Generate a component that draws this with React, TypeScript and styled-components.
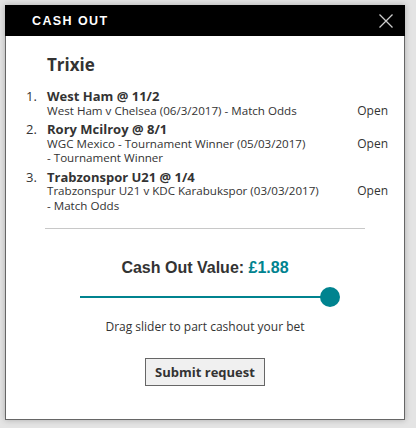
import * as React from 'react'
import styled, { createGlobalStyle } from 'styled-components'

const GlobalStyle = createGlobalStyle`
  html, body {
    margin: 0;
    padding: 0;
    background: #e4e4e4;
  }
  body {
    font-family: "Open Sans", "Liberation Sans", sans-serif;
    color: #333;
  }
`

const Page = styled.div`
  padding: 5px;
  width: 416px;
  height: 428px;
  box-sizing: border-box;
`

const Modal = styled.div`
  width: 400px;
  height: 415px;
  box-sizing: border-box;
  background: #fff;
  border: 1px solid #666;
  border-top: none;
  box-shadow: 0 0 6px rgba(0, 0, 0, 0.25);
  display: flex;
  flex-direction: column;
`

const Header = styled.div`
  height: 31px;
  margin: 0 -1px;
  background: #000;
  display: flex;
  align-items: center;
  justify-content: space-between;
  padding: 0 12px 0 27px;
`

const HeaderTitle = styled.h1`
  margin: 0;
  font-family: "Liberation Sans", Arial, sans-serif;
  font-weight: bold;
  font-size: 12.5px;
  letter-spacing: 1.4px;
  color: #fff;
`

const CloseButton = styled.button`
  border: none;
  background: none;
  padding: 0;
  width: 14px;
  height: 14px;
  display: flex;
  cursor: pointer;
`

const Body = styled.div`
  padding: 17px 16px 0 20px;
  display: flex;
  flex-direction: column;
`

const BetType = styled.h2`
  margin: 0 0 12px 21px;
  font-size: 17px;
  font-weight: bold;
  line-height: 24px;
  color: #333;
`

const Legs = styled.ol`
  list-style: none;
  margin: 0;
  padding: 0;
  display: flex;
  flex-direction: column;
  gap: 4px;
`

const Leg = styled.li`
  display: grid;
  grid-template-columns: 21px 1fr auto;
  font-size: 11.6px;
  line-height: 14.5px;
  color: #333;
`

const LegNumber = styled.span`
  font-size: 13px;
`

const LegTitle = styled.div`
  font-weight: bold;
  font-size: 13px;
`

const LegEvent = styled.span``

const LegMarket = styled.span`
  white-space: nowrap;
`

const LegStatus = styled.span`
  align-self: start;
  padding: 14.5px 0 0 12px;
  font-size: 12px;
`

const Divider = styled.hr`
  border: none;
  border-top: 1px solid #c8c8c8;
  margin: 15px 23px 0 19px;
`

const CashOut = styled.div`
  display: flex;
  flex-direction: column;
  align-items: center;
  padding-top: 29px;
`

const ValueLabel = styled.div`
  font-family: "Liberation Sans", Arial, sans-serif;
  font-weight: bold;
  font-size: 16px;
  line-height: 20px;
  color: #333;
`

const Amount = styled.span`
  color: #00838f;
`

const Slider = styled.div`
  position: relative;
  width: 250px;
  height: 20px;
  margin-top: 9px;
  display: flex;
  align-items: center;
`

const Track = styled.div`
  height: 2px;
  flex: 1;
  background: #00838f;
`

const Thumb = styled.div`
  position: absolute;
  right: -10px;
  top: 0;
  width: 20px;
  height: 20px;
  border-radius: 50%;
  background: #00838f;
`

const Hint = styled.p`
  margin: 12px 0 0;
  font-size: 12px;
  line-height: 16px;
  color: #333;
`

const Submit = styled.button`
  margin-top: 23px;
  width: 120px;
  height: 28px;
  border: 1px solid #666;
  background: #f0f0f0;
  font-family: "Open Sans", "Liberation Sans", sans-serif;
  font-weight: bold;
  font-size: 13px;
  color: #333;
  cursor: pointer;
`

const legs = [
  { title: 'West Ham @ 11/2', event: 'West Ham v Chelsea (06/3/2017)', market: 'Match Odds' },
  { title: 'Rory Mcilroy @ 8/1', event: 'WGC Mexico - Tournament Winner (05/03/2017)', market: 'Tournament Winner' },
  { title: 'Trabzonspor U21 @ 1/4', event: 'Trabzonspur U21 v KDC Karabukspor (03/03/2017)', market: 'Match Odds' },
]

const App: React.FC = () => (
  <Page>
    <GlobalStyle />
    <Modal>
      <Header>
        <HeaderTitle>CASH OUT</HeaderTitle>
        <CloseButton aria-label="Close">
          <svg width="14" height="14" viewBox="0 0 14 14">
            <path d="M0.5 0.5 L13.5 13.5 M13.5 0.5 L0.5 13.5" stroke="#ccc" strokeWidth="1.3" />
          </svg>
        </CloseButton>
      </Header>
      <Body>
        <BetType>Trixie</BetType>
        <Legs>
          {legs.map((leg, i) => (
            <Leg key={leg.title}>
              <LegNumber>{i + 1}.</LegNumber>
              <div>
                <LegTitle>{leg.title}</LegTitle>
                <LegEvent>{leg.event}</LegEvent> <LegMarket>- {leg.market}</LegMarket>
              </div>
              <LegStatus>Open</LegStatus>
            </Leg>
          ))}
        </Legs>
        <Divider />
      </Body>
      <CashOut>
        <ValueLabel>
          Cash Out Value: <Amount>£1.88</Amount>
        </ValueLabel>
        <Slider>
          <Track />
          <Thumb />
        </Slider>
        <Hint>Drag slider to part cashout your bet</Hint>
        <Submit>Submit request</Submit>
      </CashOut>
    </Modal>
  </Page>
)

export default App
